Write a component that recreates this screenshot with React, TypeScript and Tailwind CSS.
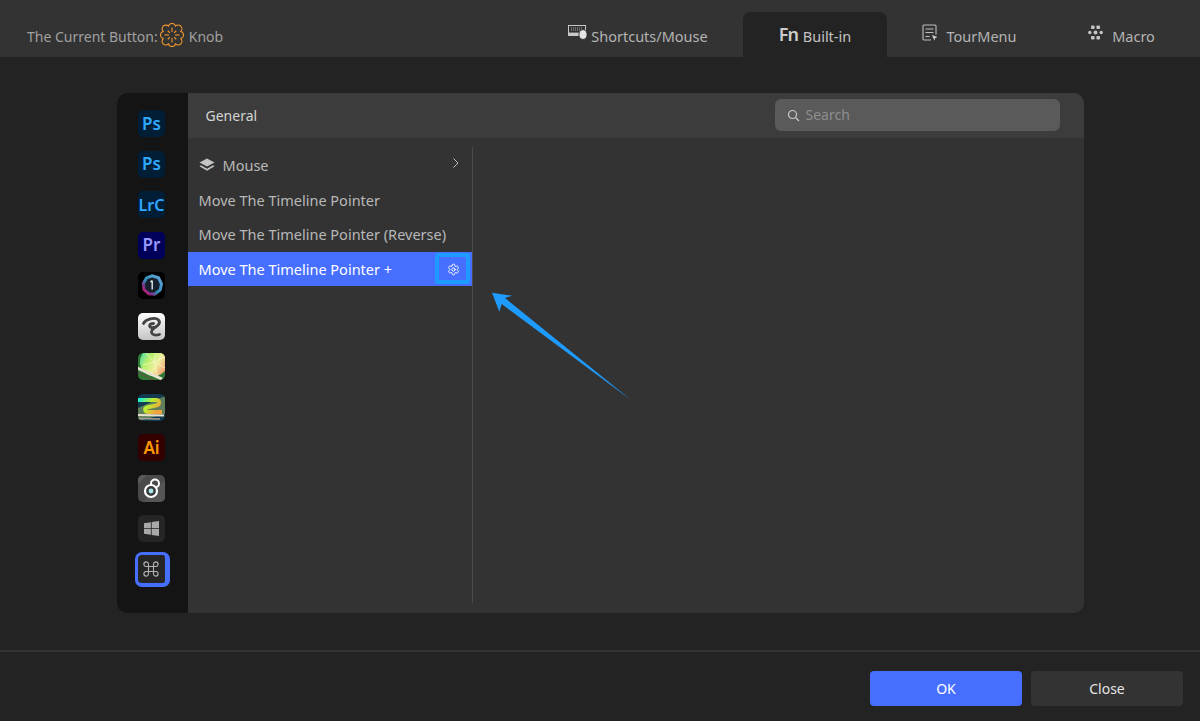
import React from "react";
import { Settings } from "lucide-react";

const font = { fontFamily: '"Noto Sans", sans-serif' };

function Knob() {
  const spokes = [0, 45, 90, 135, 180, 225, 270, 315];
  return (
    <svg width="24" height="24" viewBox="0 0 24 24" fill="none" stroke="#f0962e" strokeWidth="1.1" className="shrink-0">
      <path d="M8.5 3.2a3.6 3.6 0 0 1 7 0a3.6 3.6 0 0 1 5.3 5.3a3.6 3.6 0 0 1 0 7a3.6 3.6 0 0 1-5.3 5.3a3.6 3.6 0 0 1-7 0a3.6 3.6 0 0 1-5.3-5.3a3.6 3.6 0 0 1 0-7a3.6 3.6 0 0 1 5.3-5.3z" />
      {spokes.map((a) => (
        <line key={a} x1="12" y1={a % 90 === 0 ? 4.5 : 6} x2="12" y2="9" transform={`rotate(${a} 12 12)`} />
      ))}
    </svg>
  );
}

function KeyboardMouse() {
  return (
    <svg width="20" height="16" viewBox="0 0 20 16" fill="none" className="shrink-0">
      <rect x="0.5" y="0.5" width="17" height="10" fill="none" stroke="#c8c8c8" strokeWidth="1" />
      <path d="M3 3h12M3 5h12" stroke="#a8a8a8" strokeWidth="1.2" strokeDasharray="1 1" />
      <path d="M0.500 8.800h11" stroke="#c8c8c8" strokeWidth="2.400" />
      <rect x="11" y="4.500" width="8" height="10" rx="4" fill="#e6e6e6" stroke="#333333" strokeWidth="1" />
    </svg>
  );
}

function Tour() {
  return (
    <svg width="16" height="17" viewBox="0 0 16 17" fill="none" stroke="#bdbdbd" strokeWidth="1.1" className="shrink-0">
      <path d="M9 16H2a1 1 0 0 1-1-1V2a1 1 0 0 1 1-1h11a1 1 0 0 1 1 1v8.500" />
      <path d="M3.500 5h8M3.500 8.500h8M3.500 12.500h4" />
      <path d="M10 11l5.500 2-2.300 1-.8 2.500z" fill="#d0d0d0" stroke="none" />
    </svg>
  );
}

function MacroIcon() {
  return (
    <svg width="15" height="15" viewBox="0 0 15 15" fill="#c4c4c4" className="shrink-0">
      <rect x="3" y="0.5" width="3.6" height="3.6" rx="1" />
      <rect x="8.4" y="0.5" width="3.6" height="3.6" rx="1" />
      <circle cx="1.8" cy="7.5" r="1.7" />
      <circle cx="7.5" cy="7.5" r="1.9" />
      <circle cx="13.2" cy="7.5" r="1.7" />
      <rect x="3" y="10.9" width="3.6" height="3.6" rx="1" />
      <rect x="8.4" y="10.9" width="3.6" height="3.6" rx="1" />
    </svg>
  );
}

function Tab({ icon, label, active, extra }: { icon: React.ReactNode; label: string; active?: boolean; extra?: string }) {
  return (
    <div
      className={`flex h-[45px] items-center justify-center rounded-t-lg text-[14.5px] ${active ? "bg-[#232323] text-[#c4c4c4]" : "text-[#b4b4b4]"} ${extra ?? ""}`}
    >
      <span className="flex -translate-y-[2px] items-center">{icon}</span>
      <span className="translate-y-[2px]">{label}</span>
    </div>
  );
}

function AdobeTile({ text, bg, color, size = "text-[17px]" }: { text: string; bg: string; color: string; size?: string }) {
  return (
    <div className={`flex h-[27px] w-[27px] items-center justify-center rounded-[5px] pl-[1px] font-semibold ${bg} ${color} ${size}`}>
      {text}
    </div>
  );
}

function CaptureOne() {
  return (
    <svg width="27" height="27" viewBox="0 0 27 27">
      <defs>
        <linearGradient id="c1g" x1="1" y1="0" x2="0" y2="1">
          <stop offset="0" stopColor="#6aa8e0" />
          <stop offset="0.55" stopColor="#2f8fb8" />
          <stop offset="0.8" stopColor="#8a2a86" />
          <stop offset="1" stopColor="#e0205a" />
        </linearGradient>
      </defs>
      <rect width="27" height="27" rx="5" fill="#000" />
      <path d="M14 3.800l6.500 2 3 6.200-1.300 6-5.500 4.200-6-.4-4.800-4.400-.6-6 3.200-5.500z" fill="#16202c" stroke="url(#c1g)" strokeWidth="3" />
      <path d="M14.200 8.500v9M12.500 10l1.700-1.500" stroke="#e4ebef" strokeWidth="1.400" fill="none" />
    </svg>
  );
}

function ClipStudio() {
  return (
    <svg width="27" height="27" viewBox="0 0 27 27">
      <defs>
        <linearGradient id="csg" x1="0" y1="0" x2="0" y2="1">
          <stop offset="0" stopColor="#ffffff" />
          <stop offset="1" stopColor="#c4c4c4" />
        </linearGradient>
      </defs>
      <rect width="27" height="27" rx="5" fill="url(#csg)" />
      <path
        d="M5.500 10.500C7.500 6.500 17 3.500 20.500 7C23.500 10.500 18.500 15 13.500 14.500C10.500 14 11 10.500 15.500 10.500M18.500 13.500C14 16 12.500 18.500 14 20.500C15.500 22.500 19 22.200 21.500 21.500"
        fill="none"
        stroke="#444444"
        strokeWidth="2.800"
        strokeLinecap="round"
      />
    </svg>
  );
}

function RebelleA() {
  return (
    <svg width="27" height="27" viewBox="0 0 27 27">
      <defs>
        <linearGradient id="rag" x1="0" y1="0" x2="1" y2="0.6">
          <stop offset="0" stopColor="#2fd6c8" />
          <stop offset="0.4" stopColor="#b8f06a" />
          <stop offset="0.7" stopColor="#f0f0a0" />
          <stop offset="1" stopColor="#f0a070" />
        </linearGradient>
        <clipPath id="rac"><rect width="27" height="27" rx="5" /></clipPath>
      </defs>
      <g clipPath="url(#rac)">
        <rect width="27" height="27" fill="#2f7a35" />
        <circle cx="16" cy="9" r="14" fill="url(#rag)" />
        <path d="M16 9L8 0M16 9L18 0M16 9L27 4M16 9L27 15M16 9L20 24M16 9L5 12" stroke="#f4f8c8" strokeWidth="0.8" />
        <path d="M-1 15L24 26" stroke="#e8e2cf" strokeWidth="3" />
        <path d="M-1 19L18 28" stroke="#5b5a44" strokeWidth="1.500" />
      </g>
    </svg>
  );
}

function RebelleB() {
  return (
    <svg width="27" height="27" viewBox="0 0 27 27">
      <defs>
        <linearGradient id="rbg" x1="0" y1="0" x2="1" y2="0.4">
          <stop offset="0" stopColor="#10f0e0" />
          <stop offset="0.5" stopColor="#b8f030" />
          <stop offset="1" stopColor="#f2a23a" />
        </linearGradient>
        <clipPath id="rbc"><rect width="27" height="27" rx="5" /></clipPath>
      </defs>
      <g clipPath="url(#rbc)">
        <rect width="27" height="27" fill="#123a50" />
        <path d="M0 14L27 2V20L0 27z" fill="#5e7e5c" />
        <path d="M0 6H18C22 6 22 11 18 11.500L9 13.500C6 14.500 7 18 10 18H24" fill="none" stroke="url(#rbg)" strokeWidth="4" />
        <path d="M0 21L26 21.500" stroke="#e8e0cc" strokeWidth="2" />
        <path d="M0 24.500L22 25" stroke="#a8a290" strokeWidth="1.500" />
      </g>
    </svg>
  );
}

function Lock() {
  return (
    <svg width="27" height="27" viewBox="0 0 27 27">
      <rect width="27" height="27" rx="5" fill="#4a4a4a" />
      <path d="M5 27L27 5V22a5 5 0 0 1-5 5z" fill="#555555" />
      <path d="M0 9V5a5 5 0 0 1 5-5h4z" fill="#5a5a5a" />
      <circle cx="17" cy="8.500" r="4" fill="none" stroke="#fff" strokeWidth="2" />
      <circle cx="13" cy="16" r="6" fill="#3c3c3c" stroke="#fff" strokeWidth="2.200" />
      <circle cx="13" cy="16" r="2.400" fill="#a9e4e6" />
    </svg>
  );
}

function WindowsTile() {
  return (
    <div className="flex h-[27px] w-[27px] items-center justify-center rounded-[5px] bg-[#252525]">
      <svg width="15" height="15" viewBox="0 0 15 15" fill="#a8a8a8">
        <path d="M0 2.200L6.900 1.200V7H0zM7.700 1.100L15 0V7H7.700zM0 7.800H6.900V13.700L0 12.800zM7.700 7.800H15V15L7.700 13.900z" />
      </svg>
    </div>
  );
}

function CommandTile() {
  return (
    <div className="box-border flex h-[35px] w-[35px] translate-x-[1px] items-center justify-center rounded-[7px] border-b-[4px] border-l-[3px] border-r-[5px] border-t-[3px] border-[#466eff] bg-[#252525]">
      <svg width="16" height="16" viewBox="0 0 16 16" fill="none" stroke="#b4b4b4" strokeWidth="1.100">
        <path d="M5.500 5.500h5v5h-5zM5.500 5.500V3a2.300 2.300 0 1 0-2.500 2.500h2.500M10.500 5.500V3a2.300 2.300 0 1 1 2.500 2.500h-2.500M5.500 10.500V13a2.300 2.300 0 1 1-2.500-2.500h2.500M10.500 10.500V13a2.300 2.300 0 1 0 2.500-2.500h-2.500" />
      </svg>
    </div>
  );
}

function Layers() {
  return (
    <svg width="16" height="14" viewBox="0 0 16 14" fill="#c4c4c4" className="shrink-0 -translate-y-[1px]">
      <path d="M8 0.500L15.500 4.500L8 8.500L0.500 4.500z" />
      <path d="M2 7.200L0.500 8.200L8 12.700L15.500 8.200L14 7.200L8 10.700z" />
    </svg>
  );
}

function Row({ children, active }: { children: React.ReactNode; active?: boolean }) {
  return (
    <div className={`flex h-[34.5px] items-center pl-[11px] pt-[2px] text-[14.5px] ${active ? "bg-[#466eff] text-white" : "text-[#b8b8b8]"}`}>
      {children}
    </div>
  );
}

export default function App() {
  return (
    <div className="flex h-screen w-full flex-col bg-[#232323]" style={font}>
      <header className="flex h-[57px] shrink-0 items-end justify-between bg-[#333333]">
        <div className="flex h-[45px] items-center pl-[27px] text-[14px] text-[#a0a0a0]">
          <span className="translate-y-[2px]">The Current Button:</span>
          <span className="ml-[2px]"><Knob /></span>
          <span className="ml-[5px] translate-y-[2px]">Knob</span>
        </div>
        <nav className="flex items-end pr-[9px]">
          <Tab icon={<KeyboardMouse />} label="Shortcuts/Mouse" extra="w-[210px] gap-[3px]" />
          <Tab
            active
            extra="w-[144px] gap-[7px]"
            icon={<span className="w-[17px] translate-y-[1px] text-[18px] font-semibold leading-none tracking-[-1px] text-[#cccccc]">Fn</span>}
            label="Built-in"
          />
          <Tab icon={<Tour />} label="TourMenu" extra="w-[165px] gap-[8px]" />
          <Tab icon={<MacroIcon />} label="Macro" extra="w-[139px] gap-[9px]" />
        </nav>
      </header>

      <main className="flex flex-1 flex-col items-center pt-[36px]">
        <div className="relative flex h-[520px] w-[967px] overflow-hidden rounded-[10px] bg-[#333333]">
          <aside className="flex w-[71px] shrink-0 flex-col items-center gap-[13.5px] bg-[#141414] pr-[2px] pt-[17px]">
            <AdobeTile text="Ps" bg="bg-[#001e36]" color="text-[#31a8ff]" />
            <AdobeTile text="Ps" bg="bg-[#001e36]" color="text-[#31a8ff]" />
            <AdobeTile text="LrC" bg="bg-[#001e36]" color="text-[#31a8ff]" size="text-[16px]" />
            <AdobeTile text="Pr" bg="bg-[#00005b]" color="text-[#9999ff]" />
            <CaptureOne />
            <ClipStudio />
            <RebelleA />
            <RebelleB />
            <AdobeTile text="Ai" bg="bg-[#330000]" color="text-[#ff9a00]" />
            <Lock />
            <WindowsTile />
            <div className="-mt-[3.500px]"><CommandTile /></div>
          </aside>

          <section className="flex min-w-0 flex-1 flex-col">
            <div className="flex h-[45px] shrink-0 items-center justify-between bg-[#3c3c3c] pb-[1px] pl-[18px] pr-[24px]">
              <span className="text-[14px] text-[#d4d4d4]">General</span>
              <div className="flex h-[32px] w-[285px] items-center gap-[6px] rounded-[6px] bg-[#5a5a5a] pl-[12px] text-[14px] text-[#8e8e8e]">
                <svg width="13" height="13" viewBox="0 0 13 13" fill="none" stroke="#c8c8c8" strokeWidth="1.200">
                  <circle cx="5.500" cy="5.500" r="4" />
                  <path d="M8.500 8.500L12 12" />
                </svg>
                <span className="-translate-y-[1px]">Search</span>
              </div>
            </div>
            <div className="flex flex-1 pb-[10px] pt-[9px]">
              <div className="flex w-[284px] shrink-0 flex-col pt-[1px]">
                <Row>
                  <Layers />
                  <span className="ml-[8px] flex-1">Mouse</span>
                  <svg width="8" height="12" viewBox="0 0 8 12" fill="none" stroke="#c0c0c0" strokeWidth="1" className="mr-[12px] -translate-y-[3px]">
                    <path d="M1.500 1.500L6 6L1.500 10.500" />
                  </svg>
                </Row>
                <Row>Move The Timeline Pointer</Row>
                <Row>Move The Timeline Pointer (Reverse)</Row>
                <Row active>
                  <span className="flex-1">Move The Timeline Pointer +</span>
                  <span className="mr-[2px] flex h-[31px] w-[35px] -translate-y-[1px] items-center justify-center rounded-[3px] border-[4px] border-[#1e9bff]">
                    <Settings size={13} strokeWidth={1.8} color="#ffffff" className="translate-x-[1px] translate-y-[1px]" />
                  </span>
                </Row>
              </div>
              <div className="w-px bg-[#4a4a4a]" />
              <div className="flex-1" />
            </div>
          </section>

          <svg width="145" height="115" viewBox="0 0 145 115" className="absolute left-[370px] top-[197px]">
            <path d="M5 2.700L25 5.700L18 8L144 110L14.700 14L12.300 21.700z" fill="#1e9bff" />
          </svg>
        </div>
      </main>

      <footer className="flex h-[71px] shrink-0 items-start justify-end gap-[9px] border-t-2 border-[#333333] pr-[17px] pt-[19px]">
        <button className="h-[35px] w-[152px] rounded-[4px] bg-[#466eff] text-[14px] text-white">OK</button>
        <button className="h-[35px] w-[152px] rounded-[4px] bg-[#333333] text-[14px] text-[#e4e4e4]">Close</button>
      </footer>
    </div>
  );
}
